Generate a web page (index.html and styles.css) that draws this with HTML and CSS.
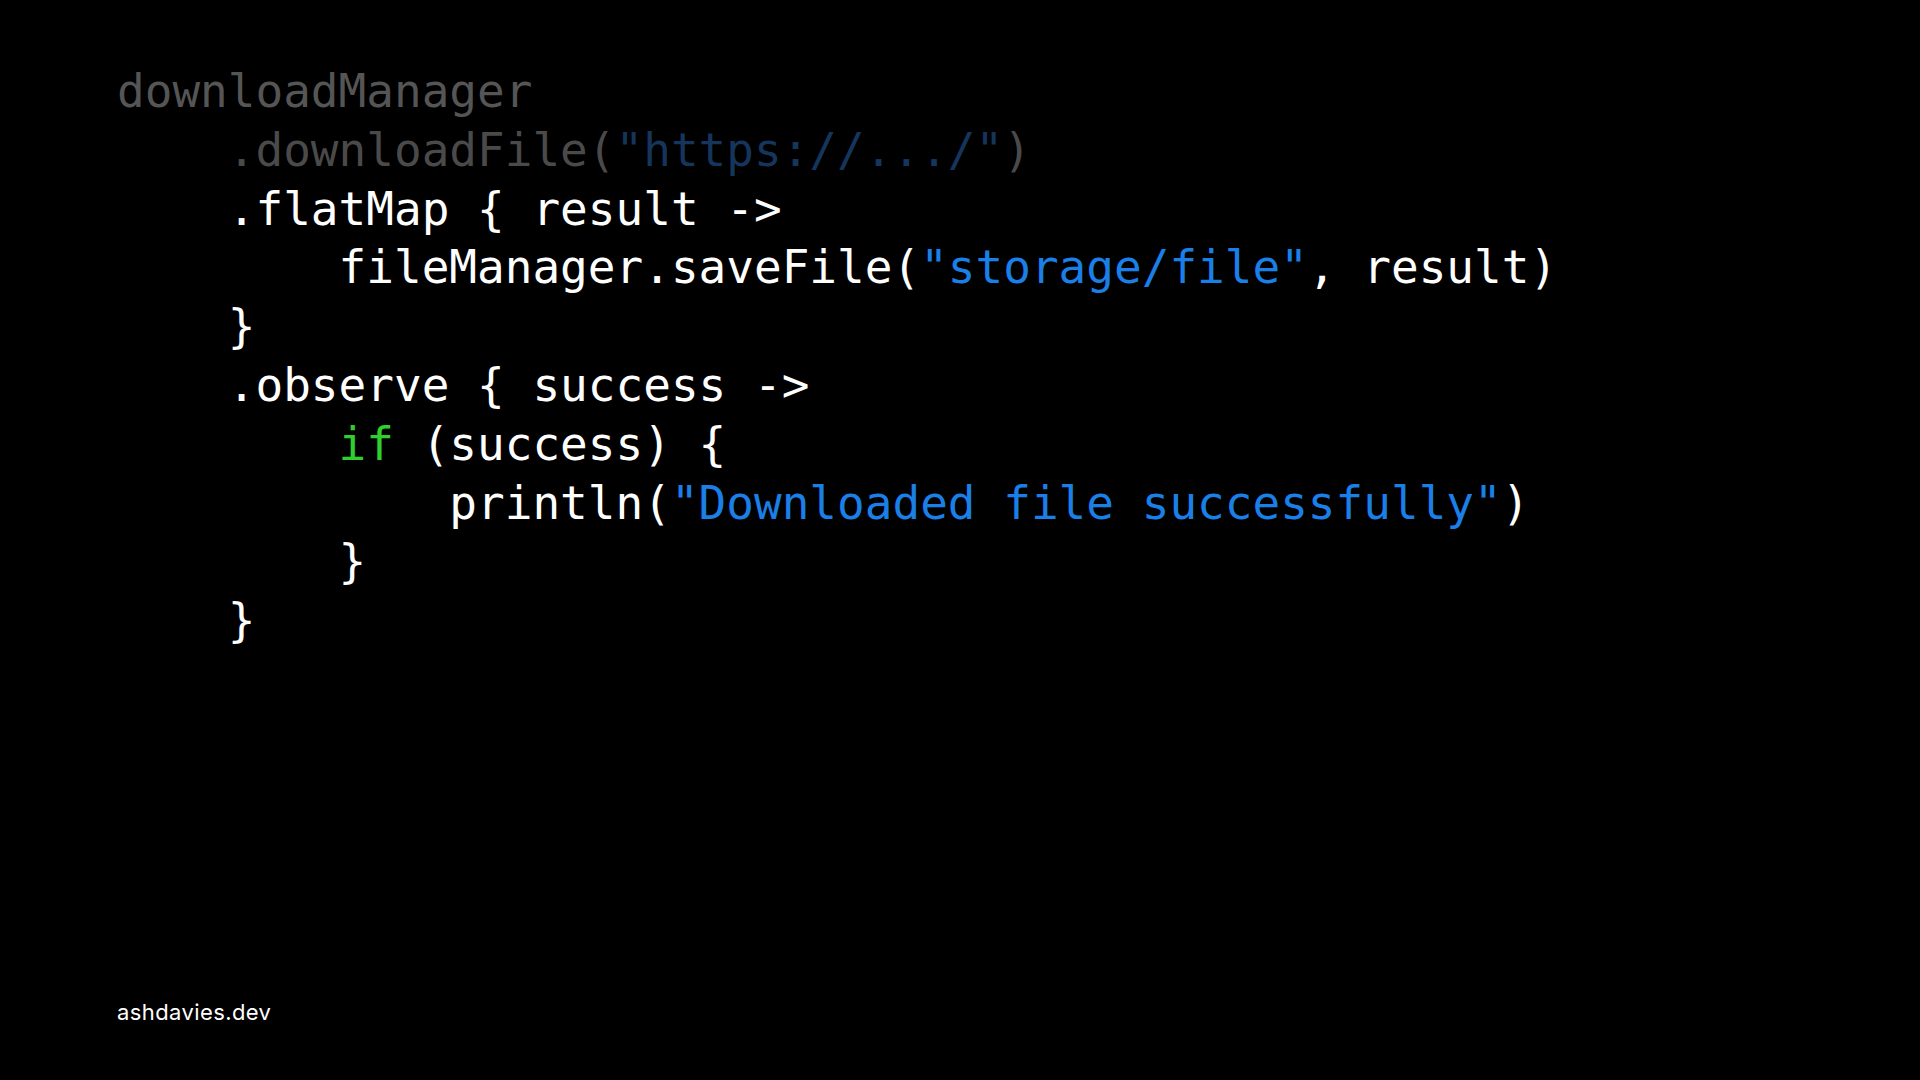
FILE: index.html
```html
<!DOCTYPE html>
<html lang="en">
<head>
<meta charset="utf-8">
<title>ashdavies.dev</title>
<link rel="stylesheet" href="styles.css">
</head>
<body>
<main class="slide">
<pre class="code"><span class="dim1">downloadManager</span>
<span class="dim2">    .downloadFile(</span><span class="dim-str">"https://.../"</span><span class="dim2">)</span>
    .flatMap { result -&gt;
        fileManager.saveFile(<span class="str">"storage/file"</span>, result)
    }
    .observe { success -&gt;
        <span class="kw">if</span> (success) {
            println(<span class="str">"Downloaded file successfully"</span>)
        }
    }</pre>
<footer class="footer">ashdavies.dev</footer>
</main>
</body>
</html>
```

FILE: styles.css
```css
html, body {
  margin: 0;
  padding: 0;
  background: #000;
}

.slide {
  width: 1920px;
  height: 1080px;
  box-sizing: border-box;
  padding: 62px 117px 55px 117px;
  display: flex;
  flex-direction: column;
  justify-content: space-between;
  background: #000;
}

.code {
  margin: 0;
  font-family: "DejaVu Sans Mono", "Liberation Mono", monospace;
  font-size: 46px;
  line-height: 58.8px;
  color: #ffffff;
  white-space: pre;
}

.dim1 { color: #555555; }
.dim2 { color: #4a4a4a; }
.dim-str { color: #15355c; }
.str { color: #1a7fe6; }
.kw { color: #2ecf2e; }

.footer {
  font-family: Inter, "Liberation Sans", sans-serif;
  font-size: 22px;
  line-height: 26px;
  letter-spacing: 0.4px;
  color: #ffffff;
}
```
